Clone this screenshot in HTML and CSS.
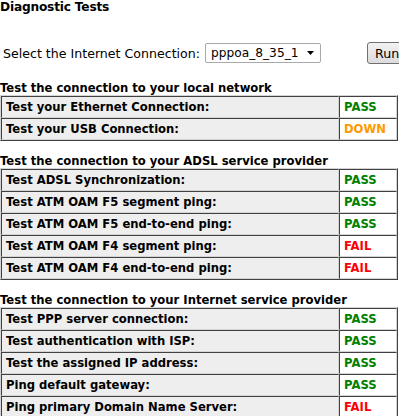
FILE: index.html
```html
<!DOCTYPE html>
<html>
<head>
  <title>Diagnostic Tests</title>
  <link rel="stylesheet" href="styles.css">
</head>
<body>
  <div class="page">
    <div class="page-title">Diagnostic Tests</div>

    <div class="connection-row">
      <span class="connection-label">Select the Internet Connection:</span>
      <div class="select-box">
        <span>pppoa_8_35_1</span>
        <svg class="caret" width="7" height="4" viewBox="0 0 7 4"><path d="M0 0h7L3.5 4z" fill="#000"/></svg>
      </div>
      <button class="run-button">Run</button>
    </div>

    <div class="section-title first">Test the connection to your local network</div>
    <table class="test-table">
      <tr><td class="test-name">Test your Ethernet Connection:</td><td class="result pass">PASS</td></tr>
      <tr><td class="test-name">Test your USB Connection:</td><td class="result down">DOWN</td></tr>
    </table>

    <div class="section-title">Test the connection to your ADSL service provider</div>
    <table class="test-table">
      <tr><td class="test-name">Test ADSL Synchronization:</td><td class="result pass">PASS</td></tr>
      <tr><td class="test-name">Test ATM OAM F5 segment ping:</td><td class="result pass">PASS</td></tr>
      <tr><td class="test-name">Test ATM OAM F5 end-to-end ping:</td><td class="result pass">PASS</td></tr>
      <tr><td class="test-name">Test ATM OAM F4 segment ping:</td><td class="result fail">FAIL</td></tr>
      <tr><td class="test-name">Test ATM OAM F4 end-to-end ping:</td><td class="result fail">FAIL</td></tr>
    </table>

    <div class="section-title">Test the connection to your Internet service provider</div>
    <table class="test-table">
      <tr><td class="test-name">Test PPP server connection:</td><td class="result pass">PASS</td></tr>
      <tr><td class="test-name">Test authentication with ISP:</td><td class="result pass">PASS</td></tr>
      <tr><td class="test-name">Test the assigned IP address:</td><td class="result pass">PASS</td></tr>
      <tr><td class="test-name">Ping default gateway:</td><td class="result pass">PASS</td></tr>
      <tr><td class="test-name">Ping primary Domain Name Server:</td><td class="result fail">FAIL</td></tr>
    </table>
  </div>
</body>
</html>
```

FILE: styles.css
```css
body {
  margin: 0;
  padding: 0;
  background: #fff;
  color: #000;
  font-family: 'DejaVu Sans', Verdana, sans-serif;
  overflow: hidden;
}

.page {
  width: 420px;
}

.page-title {
  font-size: 12.2px;
  font-weight: bold;
  letter-spacing: -0.2px;
  height: 14px;
}

.connection-row {
  display: flex;
  align-items: center;
  margin-top: 28px;
  height: 22px;
  padding-left: 3px;
}

.connection-label {
  font-size: 12.6px;
  margin-right: 5px;
}

.select-box {
  display: flex;
  align-items: center;
  justify-content: space-between;
  width: 103px;
  height: 18px;
  padding: 0 6px 0 5px;
  border: 1px solid #a9a9a9;
  border-radius: 2px;
  font-size: 12.2px;
}

.run-button {
  margin-left: 46px;
  height: 22px;
  width: 50px;
  padding: 0 7px;
  font-family: 'DejaVu Sans', Verdana, sans-serif;
  font-size: 12.6px;
  text-align: left;
  border: 1px solid #707070;
  border-radius: 3px;
  background: linear-gradient(#f2f2f2, #dcdcdc);
}

.section-title {
  font-size: 11.6px;
  font-weight: bold;
  margin-top: 13px;
  height: 14px;
}

.section-title.first {
  margin-top: 17px;
}

.test-table {
  width: 398px;
  border-collapse: separate;
  border-spacing: 0;
  border: 1px solid;
  border-color: #d4d4d4 #404040 #404040 #d4d4d4;
}

.test-table td {
  height: 18px;
  padding: 1px 4px;
  font-size: 11.6px;
  font-weight: bold;
  border: 1px solid;
  border-color: #404040 #d4d4d4 #d4d4d4 #404040;
}

.test-name {
  background: #eeeeee;
}

.result {
  width: 48px;
  background: #fff;
}

.pass {
  color: #008000;
}

.down {
  color: #ff9900;
}

.fail {
  color: #ff0000;
}
```
